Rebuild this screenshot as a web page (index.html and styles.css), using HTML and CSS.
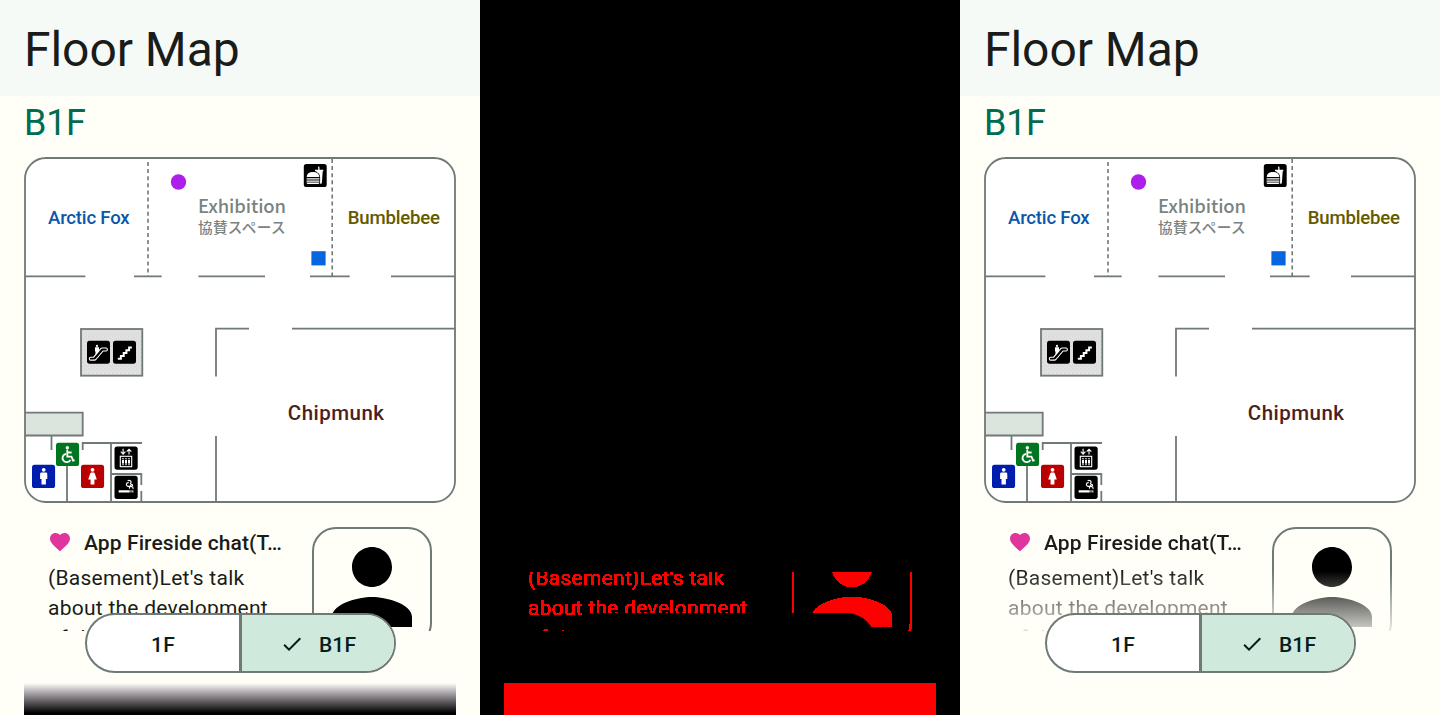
FILE: index.html
```html
<!DOCTYPE html>
<html lang="en">
<head>
<meta charset="utf-8">
<title>Floor Map</title>
<link rel="stylesheet" href="styles.css">
</head>
<body>
<svg class="defs" width="0" height="0" aria-hidden="true">
  <defs>
    <filter id="hard-edge" x="0" y="0" width="1" height="1">
      <feComponentTransfer><feFuncA type="linear" slope="30" intercept="-1.5"/></feComponentTransfer>
    </filter>
    <pattern id="grain" width="4" height="4" patternUnits="userSpaceOnUse">
      <rect width="4" height="4" fill="#dfdfdf"/><path d="M0 0h1v1H0zM2 2h1v1H2z" fill="#d6d6d6"/><path d="M3 0h1v1H3zM1 3h1v1H1z" fill="#e6e6e6"/>
    </pattern>
    <symbol id="heart" viewBox="0 0 24 24"><path d="M12 21.35l-1.45-1.32C5.4 15.36 2 12.28 2 8.5 2 5.42 4.42 3 7.5 3c1.74 0 3.41.81 4.5 2.09C13.09 3.81 14.76 3 16.5 3 19.58 3 22 5.42 22 8.5c0 3.78-3.4 6.86-8.55 11.54L12 21.35z"/></symbol>
    <symbol id="person" viewBox="0 0 24 24"><path d="M12 12c2.21 0 4-1.79 4-4s-1.79-4-4-4-4 1.79-4 4 1.79 4 4 4zm0 2c-2.67 0-8 1.34-8 4v2h16v-2c0-2.66-5.33-4-8-4z"/></symbol>
    <symbol id="check" viewBox="0 0 24 24"><path d="M9 16.17L4.83 12l-1.42 1.41L9 19 21 7l-1.41-1.41z"/></symbol>
    <symbol id="plan" viewBox="24 157 432 346">
      <rect x="25" y="158" width="430" height="344" rx="21" fill="#fff"/>
      <g fill="none" stroke="#6f7975" stroke-width="1.8">
        <path d="M25 276.3H85.3M134 276.3h27.7M198.5 276.3H265M310 276.3h39.7M391 276.3h64"/>
        <path d="M216 376.5V328.7h33M292 328.7h163M216 436v66"/>
        <rect x="81" y="329" width="61.3" height="46.7" fill="url(#grain)"/>
        <path d="M25 412.7h57.7v22.8H25" fill="#dce5dd"/>
        <path d="M51.5 436v14M67 466v36M82.7 450v-7H142M111 443v59M111 474h30.3v11M141.3 491v11"/>
        <g stroke-width="1.6" stroke-dasharray="4 3.1"><path d="M148 162v114"/><path d="M332.2 159v117"/></g>
      </g>
      <circle cx="178.5" cy="182" r="7.7" fill="#ad1fea"/>
      <rect x="311.4" y="251.2" width="14.2" height="14.2" fill="#0566e0"/>
      <g>
        <rect x="303.8" y="164" width="22.9" height="23" rx="2.6"/>
        <rect x="87" y="340.7" width="23" height="23" rx="2.6"/>
        <rect x="113" y="340.7" width="23" height="23" rx="2.6"/>
        <rect x="114.5" y="446.5" width="23.2" height="23.2" rx="2.6"/>
        <rect x="114.5" y="475.7" width="23.2" height="23.2" rx="2.6"/>
        <rect x="56" y="442.8" width="23.1" height="23.2" rx="2.6" fill="#00751f"/>
        <rect x="32" y="464.8" width="23.1" height="23.2" rx="2.6" fill="#001eae"/>
        <rect x="81" y="464.8" width="23.1" height="23.2" rx="2.6" fill="#b90000"/>
      </g>
      <!-- food court -->
      <g fill="#fff">
        <path d="M306.7 177.1c0-3.5 2.6-5.2 6.3-5.2s6.3 1.7 6.3 5.2zM306.6 178.2h12.8v1.4h-12.8zM306.6 180.5h12.8v1.2h-12.8zM306.6 182.5h12.8v.3c0 .7-.4 1.1-1.1 1.1h-10.6c-.7 0-1.1-.4-1.1-1.1z"/>
        <path d="M315 169.7h3.3l-.3-2.9 1.3-.2.3 3.1h3.7v1.6h-.6l-.8 11.4c-.1.7-.4 1-1 1h-.8v-6.5c0-2.3-1.3-4.4-3.5-5.3l-.2-.6H315z"/>
      </g>
      <!-- escalator -->
      <path d="M90.6 357.2h3l7.1-8.5c.4-.5.8-.7 1.4-.7h4.1c1.5 0 1.5 3 0 3h-3.1l-7.2 8.5c-.4.4-.8.6-1.4.6h-3.9c-1.7 0-1.7-2.9 0-2.9z" fill="none" stroke="#fff" stroke-width="1.1"/>
      <circle cx="97" cy="345.9" r="1.1" fill="#fff"/><path d="M95 347.3h4v4.2l-3 3.5h-.5v-3.4H95z" fill="#fff"/>
      <!-- stairs -->
      <path d="M117.8 358.7h3.1v-2.8h2.8v-2.8h2.7v-2.8h2.7v-2.8h2.8" fill="none" stroke="#fff" stroke-width="2"/>
      <!-- wheelchair access -->
      <g fill="none" stroke="#fff" stroke-width="1.8"><path d="M67.3 449.8v6.9h4.2l1.6 4 1.5-.6M67.3 452.5h4.3M66 453.8a4.2 4.2 0 1 0 4.5 6"/></g><circle cx="67.3" cy="447.8" r="1.7" fill="#fff"/>
      <!-- restrooms -->
      <g fill="#fff"><circle cx="43.7" cy="469.8" r="1.9"/><path d="M41.6 472.4h4.2c1 0 1.5.6 1.5 1.5v5h-1.4v5.7h-4.4v-5.7h-1.4v-5c0-.9.5-1.5 1.5-1.5z"/><circle cx="92.5" cy="469.8" r="1.9"/><path d="M91.4 472.4h2.2c.6 0 .9.3 1.1.9l2.1 6.3h-2.4v5h-3.8v-5h-2.4l2.1-6.3c.2-.6.5-.9 1.1-.9z"/></g>
      <!-- elevator -->
      <g fill="none" stroke="#fff" stroke-width="1.1"><rect x="120.3" y="456.3" width="11.4" height="10.4"/><path d="M123.1 448.8v5M120.8 451.7l2.3 2.4 2.3-2.4M129 454.4v-5M126.7 451.7l2.3-2.4 2.3 2.4"/></g>
      <g fill="#fff"><circle cx="123" cy="458.7" r=".8"/><circle cx="126" cy="458.7" r=".8"/><circle cx="129" cy="458.7" r=".8"/><path d="M122 460h2v3h-.4v2.3h-1.2V463h-.4zM125 460h2v3h-.4v2.3h-1.2V463h-.4zM128 460h2v3h-.4v2.3h-1.2V463h-.4z"/></g>
      <!-- smoking area -->
      <path d="M118.7 490.2h11v2.4h-11zM130.5 490.2h1v2.4h-1zM132.3 490.2h1v2.4h-1z" fill="#fff"/><path d="M133 488.9c.2-2-.9-2.6-2.6-2.5-2.8.2-4.4-.6-4-2.4.3-1.1 1.4-1.4 2.3-1.4M129.6 488.6c-1-1.3 1.4-1.7 1.2-4M127.6 480.8c2.2-.9 4 .2 3.3 1.8-.3.6-.8.7-.2 1.3.9.7 2.2.8 2 2.2" fill="none" stroke="#fff" stroke-width="1.2"/>
      <rect x="25" y="158" width="430" height="344" rx="21" fill="none" stroke="#6f7975" stroke-width="1.8"/>
    </symbol>
  </defs>
</svg>
<main class="comparison">
  <section class="phone">
    <header class="top-bar"><h1 class="title">Floor Map</h1></header>
    <div class="content">
      <h2 class="level">B1F</h2>
      <svg class="map" viewBox="24 157 432 346">
        <use href="#plan" x="24" y="157" width="432" height="346"/>
        <text class="room room-arctic" x="48" y="224" textLength="81.7">Arctic Fox</text>
        <text class="room room-bumble" x="347.8" y="224" textLength="92.2">Bumblebee</text>
        <text class="room room-chip" x="287.8" y="419.9" textLength="96.2">Chipmunk</text>
        <text class="hall" x="198" y="212.7" textLength="88">Exhibition</text>
        <text class="hall-ja" x="198" y="233" textLength="87.5">協賛スペース</text>
      </svg>
      <article class="event">
        <div class="event-text">
          <h3 class="event-title"><svg class="heart"><use href="#heart"/></svg><span class="event-name">App Fireside chat(T…</span></h3>
          <p class="event-body">(Basement)Let's talk<br>about the development<br>of the</p>
        </div>
        <div class="avatar"><svg class="person"><use href="#person"/></svg></div>
      </article>
      <div class="shade"></div>
    </div>
    <div class="switch"><span class="option">1F</span><span class="option option-on"><svg class="check"><use href="#check"/></svg>B1F</span></div>
  </section>

  <section class="phone phone-diff">
    <div class="top-bar"></div>
    <div class="content">
      <div class="level"></div>
      <div class="map"></div>
      <div class="event">
        <div class="event-text">
          <div class="event-title"></div>
          <p class="event-body">(Basement)Let's talk<br>about the development<br>of the</p>
        </div>
        <div class="avatar"><svg class="person"><use href="#person"/></svg></div>
      </div>
      <div class="shade"></div>
    </div>
    <div class="switch"></div>
  </section>

  <section class="phone phone-faded">
    <header class="top-bar"><h1 class="title">Floor Map</h1></header>
    <div class="content">
      <h2 class="level">B1F</h2>
      <svg class="map" viewBox="24 157 432 346">
        <use href="#plan" x="24" y="157" width="432" height="346"/>
        <text class="room room-arctic" x="48" y="224" textLength="81.7">Arctic Fox</text>
        <text class="room room-bumble" x="347.8" y="224" textLength="92.2">Bumblebee</text>
        <text class="room room-chip" x="287.8" y="419.9" textLength="96.2">Chipmunk</text>
        <text class="hall" x="198" y="212.7" textLength="88">Exhibition</text>
        <text class="hall-ja" x="198" y="233" textLength="87.5">協賛スペース</text>
      </svg>
      <article class="event">
        <div class="event-text">
          <h3 class="event-title"><svg class="heart"><use href="#heart"/></svg><span class="event-name">App Fireside chat(T…</span></h3>
          <p class="event-body">(Basement)Let's talk<br>about the development<br>of the</p>
        </div>
        <div class="avatar"><svg class="person"><use href="#person"/></svg></div>
      </article>
    </div>
    <div class="switch"><span class="option">1F</span><span class="option option-on"><svg class="check"><use href="#check"/></svg>B1F</span></div>
  </section>
</main>
</body>
</html>
```
FILE: styles.css
```css
* { box-sizing: border-box; }
body { margin: 0; font-family: Roboto, "Noto Sans CJK JP", sans-serif; color: #191c1a; }
h1, h2, h3, p { margin: 0; font-weight: 400; }
.defs { position: absolute; }
.comparison { display: grid; grid-template-columns: repeat(3, 480px); height: 715px; overflow: hidden; }
.phone { position: relative; height: 715px; overflow: hidden; background: #fffff7; }
.top-bar { height: 96px; padding: 20px 24px 0; background: #f6faf7; }
.title { font-size: 48px; line-height: 60px; letter-spacing: -.05px; }
.content { padding: 3px 24px 0; }
.level { height: 48px; margin-bottom: 10px; font-size: 36px; line-height: 48px; letter-spacing: -.3px; color: #006c51; }
.map { display: block; width: 432px; height: 346px; }
.room { font-size: 18.6px; font-weight: 500; }
.room-arctic { fill: #0b57a8; }
.room-bumble { fill: #645a00; }
.room-chip { fill: #4d211a; font-size: 20.5px; }
.hall { font: 500 18.4px "Noto Sans CJK JP", sans-serif; fill: #7b837f; }
.hall-ja { font: 500 14.6px "Noto Sans CJK JP", sans-serif; fill: #7b837f; }
.event { display: flex; justify-content: space-between; height: 128px; padding: 24px 24px 0; overflow: hidden; }
.event-text { width: 240px; white-space: nowrap; }
.event-title { display: flex; height: 30px; gap: 12px; padding-top: 1px; font-size: 21px; line-height: 30px; }
.heart { width: 24px; height: 24px; margin-top: 2px; fill: #e0359c; flex: none; }
.event-name { font-weight: 500; letter-spacing: .1px; }
.event-body { margin-top: 6px; font-size: 21px; line-height: 30px; letter-spacing: .26px; }
.avatar { flex: none; width: 120px; height: 120px; border: 2px solid #6f7975; border-radius: 24px; }
.person { display: block; width: 120px; height: 120px; margin: -2px; fill: #000; }
.shade { height: 32px; margin-top: 52px; background: linear-gradient(#fffff7, #a7a2a7 32%, #555255 62%, #000 94%); }
.switch { position: absolute; left: 85px; top: 613px; display: grid; grid-template-columns: 152px 1fr; width: 311px; height: 60px; border: 2px solid #6f7975; border-radius: 30px; background: #fff; overflow: hidden; }
.option { display: flex; align-items: center; justify-content: center; font-size: 21px; font-weight: 500; line-height: 30px; letter-spacing: .15px; color: #05201a; padding-top: 3px; }
.option-on { gap: 15px; border-left: 3px solid #6f7975; background: #cfeadd; }
.check { width: 24px; height: 24px; margin-top: -2px; fill: #05201a; }
.phone-diff { background: #000; }
.phone-diff .top-bar { background: none; }
.phone-diff .event { color: #f00; filter: url(#hard-edge); clip-path: inset(69px 0 0 0); }
.phone-diff .avatar { border-color: #f00; }
.phone-diff .person { fill: #f00; }
.phone-diff .shade { background: #f00; }
.phone-diff .switch { border-color: #000; background: #000; }
.phone-faded .event { -webkit-mask-image: linear-gradient(#000 68px, transparent 140px); mask-image: linear-gradient(#000 68px, transparent 140px); -webkit-mask-size: 100% 140px; mask-size: 100% 140px; }
```
